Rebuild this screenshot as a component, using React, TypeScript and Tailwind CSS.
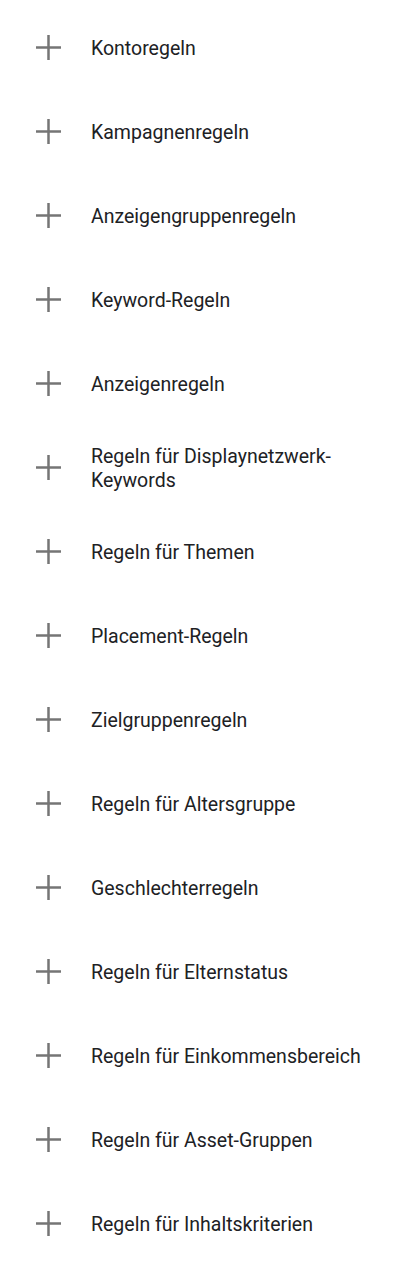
const rules = [
  "Kontoregeln",
  "Kampagnenregeln",
  "Anzeigengruppenregeln",
  "Keyword-Regeln",
  "Anzeigenregeln",
  "Regeln für Displaynetzwerk-Keywords",
  "Regeln für Themen",
  "Placement-Regeln",
  "Zielgruppenregeln",
  "Regeln für Altersgruppe",
  "Geschlechterregeln",
  "Regeln für Elternstatus",
  "Regeln für Einkommensbereich",
  "Regeln für Asset-Gruppen",
  "Regeln für Inhaltskriterien",
];

function PlusIcon() {
  return (
    <svg
      className="w-[25px] h-[25px] shrink-0 text-[#757575]"
      viewBox="0 0 25 25"
      fill="none"
      aria-hidden="true"
    >
      <path d="M12.5 0v25M0 12.5h25" stroke="currentColor" strokeWidth="2.5" />
    </svg>
  );
}

export default function App() {
  return (
    <div className="w-[403px] min-h-[1272px] bg-white pt-[5px] font-['Roboto',sans-serif]">
      <ul className="flex flex-col">
        {rules.map((rule) => (
          <li
            key={rule}
            className="h-[84px] flex flex-row items-center pl-9 pr-6 gap-[30px] cursor-pointer hover:bg-gray-100"
          >
            <PlusIcon />
            <span className="pt-[3px] text-[19.5px] leading-[24px] font-normal text-[#202124]">
              {rule}
            </span>
          </li>
        ))}
      </ul>
    </div>
  );
}
